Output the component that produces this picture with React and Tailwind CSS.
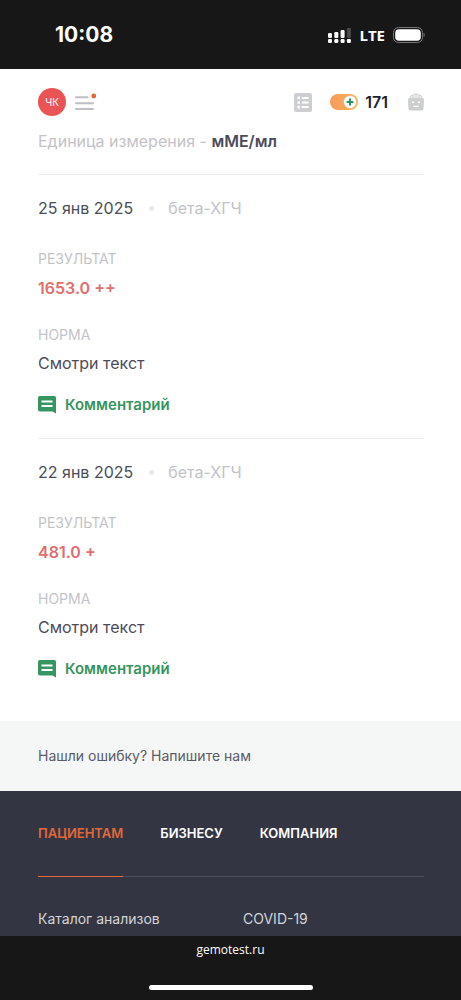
const results = [
  { id: 1, date: '25 янв 2025', name: 'бета-ХГЧ', value: '1653.0 ++', norm: 'Смотри текст' },
  { id: 2, date: '22 янв 2025', name: 'бета-ХГЧ', value: '481.0 +', norm: 'Смотри текст' },
]

const tabs = ['ПАЦИЕНТАМ', 'БИЗНЕСУ', 'КОМПАНИЯ']

function SignalIcon() {
  return (
    <svg width="23" height="16" viewBox="0 0 23 16" fill="#fff" aria-hidden="true">
      <rect x="0" y="6" width="4" height="5" rx="1.2" />
      <rect x="6.3" y="5" width="4" height="6" rx="1.2" />
      <rect x="12.6" y="3" width="4" height="8" rx="1.2" />
      <rect x="18.9" y="1" width="4" height="10" rx="1.2" fill="#4a4a4a" />
      <rect x="0" y="12" width="4" height="4" rx="1.2" />
      <rect x="6.3" y="12" width="4" height="4" rx="1.2" />
      <rect x="12.6" y="12" width="4" height="4" rx="1.2" />
      <rect x="18.9" y="12" width="4" height="4" rx="1.2" />
    </svg>
  )
}

function BatteryIcon() {
  return (
    <svg width="32" height="16" viewBox="0 0 32 16" fill="none" aria-hidden="true">
      <rect x="0.5" y="0.5" width="29" height="15" rx="5" stroke="#777" />
      <rect x="2.2" y="2.2" width="25.600" height="11.600" rx="3.8" fill="#fff" />
      <path d="M30.6 5.8c1.5.7 1.5 3.7 0 4.4z" fill="#777" />
    </svg>
  )
}

function MenuIcon() {
  return (
    <svg width="22" height="18" viewBox="0 0 22 18" fill="none" aria-hidden="true">
      <path d="M1 4.3h11.4M1 10.2h17M1 16.1h17" stroke="#bfc0c6" strokeWidth="2" strokeLinecap="round" />
      <circle cx="18.8" cy="3" r="2.4" fill="#e0683a" />
    </svg>
  )
}

function ListIcon() {
  return (
    <svg width="18" height="19" viewBox="0 0 18 19" aria-hidden="true">
      <rect width="18" height="19" rx="2" fill="#cdced2" />
      <g fill="#fff">
        <rect x="3.4" y="3.6" width="2.6" height="2.6" rx=".5" />
        <rect x="3.4" y="8.2" width="2.6" height="2.6" rx=".5" />
        <rect x="3.4" y="12.8" width="2.6" height="2.6" rx=".5" />
        <rect x="7.8" y="3.9" width="6.8" height="2" rx=".5" />
        <rect x="7.8" y="8.5" width="6.8" height="2" rx=".5" />
        <rect x="7.8" y="13.1" width="6.8" height="2" rx=".5" />
      </g>
    </svg>
  )
}

function BonusIcon() {
  return (
    <svg width="28" height="16" viewBox="0 0 28 16" aria-hidden="true">
      <defs>
        <linearGradient id="bonus" x1="0" y1="0" x2="1" y2="0">
          <stop offset="0" stopColor="#f59a5c" />
          <stop offset="1" stopColor="#f9b45a" />
        </linearGradient>
      </defs>
      <rect width="28" height="16" rx="8" fill="url(#bonus)" />
      <circle cx="20" cy="8" r="6.2" fill="#fff" />
      <path d="M20 4.6v6.8M16.6 8h6.8" stroke="#2a9162" strokeWidth="2" />
    </svg>
  )
}

function BasketIcon() {
  return (
    <svg width="16" height="18" viewBox="0 0 16 18" aria-hidden="true">
      <path d="M2.2 6V3.8c0-.8.6-1.300 1.400-1.300h1.200c.3-1 .9-1.500 1.800-1.500h2.800c.9 0 1.500.5 1.800 1.500h1.200c.8 0 1.400.5 1.400 1.300V6" fill="#eeeef0" stroke="#cdced2" />
      <path d="M5 5.500v-3M8 5.500V1M11 5.500v-3" stroke="#cdced2" />
      <path d="M1.500 5h13c.8 0 1.500.7 1.500 1.500l-.4 8.500c-.1 1.400-1.100 2.400-2.500 2.400H2.900C1.500 17.400.5 16.400.4 15L0 6.500C0 5.700.7 5 1.500 5z" fill="#cdced2" />
      <circle cx="5" cy="9.200" r="1" fill="#fff" />
      <circle cx="11" cy="9.200" r="1" fill="#fff" />
      <path d="M5.800 13.200c1.200.4 3.200.4 4.400 0" fill="none" stroke="#fff" strokeWidth="1.400" strokeLinecap="round" />
    </svg>
  )
}

function CommentIcon() {
  return (
    <svg width="18" height="18" viewBox="0 0 18 18" aria-hidden="true">
      <path d="M1.800 0h14.400C17.200 0 18 .8 18 1.800V17.500L14.500 15.400H1.800C.8 15.400 0 14.600 0 13.600V1.800C0 .8.800 0 1.800 0z" fill="#369560" />
      <path d="M3.500 5.400h11M3.500 10h11" stroke="#fff" strokeWidth="2" />
    </svg>
  )
}

function ResultCard({ result }) {
  return (
    <article className="border-t border-[#ebebec] py-[21px]">
      <div className="flex items-center text-base leading-6">
        <h2 className="text-[#4b4c59]">{result.date}</h2>
        <span className="mr-[14px] ml-4 h-[5px] w-[5px] rounded-full bg-[#e8e8ea]" />
        <span className="text-[#c3c3c7]">{result.name}</span>
      </div>
      <dl>
        <dt className="mt-[29px] text-sm leading-5 text-[#c3c3c7]">РЕЗУЛЬТАТ</dt>
        <dd className="mt-[7px] text-base leading-6 font-semibold text-[#df6e6c]">{result.value}</dd>
        <dt className="mt-[25px] text-sm leading-5 text-[#c3c3c7]">НОРМА</dt>
        <dd className="mt-1.5 text-base leading-6 text-[#4b4c59]">{result.norm}</dd>
      </dl>
      <button type="button" className="mt-[18px] flex items-center gap-[9px] text-[15px] leading-6 font-semibold text-[#369560]">
        <CommentIcon />
        Комментарий
      </button>
    </article>
  )
}

export default function App() {
  return (
    <div className="flex min-h-screen flex-col bg-white font-['Inter','Liberation_Sans',sans-serif]">
      {/* Status bar */}
      <div className="flex h-[69px] items-center justify-between bg-[#171717] pr-9 pl-[55px] text-white">
        <span className="text-[21px] leading-6 font-bold">10:08</span>
        <div className="flex items-center gap-2">
          <SignalIcon />
          <span className="font-['Open_Sans',sans-serif] text-[15px] leading-6 font-bold">LTE</span>
          <BatteryIcon />
        </div>
      </div>

      <header className="flex items-center justify-between pt-[19px] pr-[37px] pl-[38px]">
        <div className="flex items-center gap-[9px]">
          <a href="#profile" className="flex h-7 w-7 items-center justify-center rounded-full bg-[#ea5455] text-[10px] text-white">ЧК</a>
          <button type="button" aria-label="Меню">
            <MenuIcon />
          </button>
        </div>
        <div className="flex items-center">
          <a href="#orders" aria-label="Заказы"><ListIcon /></a>
          <a href="#bonus" className="ml-[18px] flex items-center gap-[7px] text-base leading-6 font-semibold text-[#20222e]">
            <BonusIcon />
            171
          </a>
          <a href="#basket" aria-label="Корзина" className="ml-5"><BasketIcon /></a>
        </div>
      </header>

      <main className="pt-[13px] pr-[37px] pb-[19px] pl-[38px]">
        <p className="pb-[21px] text-base leading-6 text-[#c3c3c7]">
          Единица измерения - <span className="font-semibold text-[#4b4c59]">мМЕ/мл</span>
        </p>
        {results.map(r => <ResultCard key={r.id} result={r} />)}
      </main>

      <div className="bg-[#f5f7f7] py-[25px] pr-[37px] pl-[38px]">
        <a href="#feedback" className="block text-sm leading-5 text-[#5a5b66]">Нашли ошибку? Напишите нам</a>
      </div>

      <footer className="grow bg-[#333642] pt-8 pr-[37px] pl-[38px]">
        <nav className="flex gap-[37px] border-b border-[#4b4d58] text-[13px] leading-5 font-semibold">
          {tabs.map((tab, i) => (
            <a key={tab} href="#tab"
              className={i === 0 ? '-mb-px border-b border-[#e0683a] pb-[33px] text-[#e0683a]' : 'pb-[33px] text-white'}>
              {tab}
            </a>
          ))}
        </nav>
        <div className="grid grid-cols-[205px_1fr] pt-8 pb-[7px] text-sm leading-5 text-[#d3d4d9]">
          <a href="#catalog">Каталог анализов</a>
          <a href="#covid">COVID-19</a>
        </div>
      </footer>

      {/* Browser bar */}
      <div className="flex flex-col items-center bg-[#171717] pt-1 pb-[10px] text-white">
        <span className="font-['Open_Sans',sans-serif] text-xs leading-5">gemotest.ru</span>
        <span className="mt-[25px] h-[5px] w-[164px] rounded-full bg-white" />
      </div>
    </div>
  )
}
